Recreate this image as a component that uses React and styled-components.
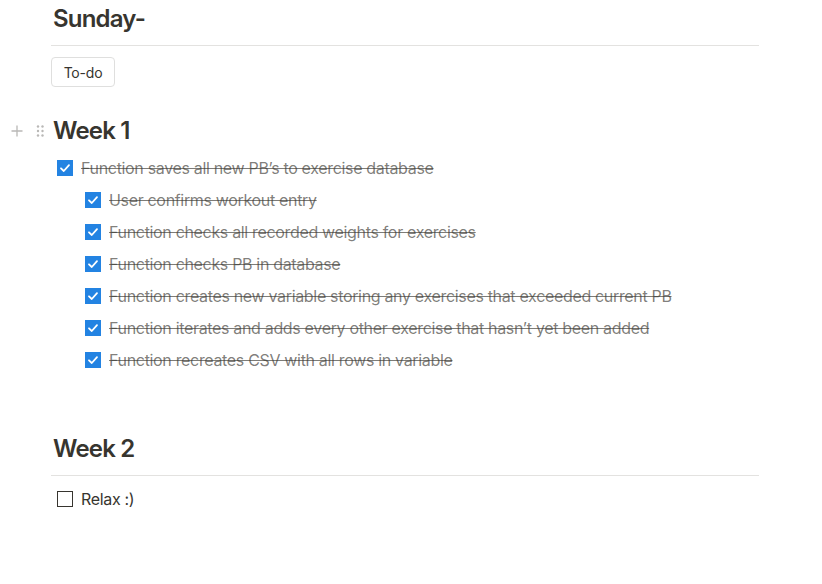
import React from "react";
import styled, { createGlobalStyle } from "styled-components";

const Global = createGlobalStyle`
  html, body { margin: 0; padding: 0; background: #ffffff; }
  body {
    font-family: Inter, "Noto Sans", "Liberation Sans", sans-serif;
    color: #37352f;
    -webkit-font-smoothing: antialiased;
  }
`;

const Page = styled.div`
  width: 708px;
  padding: 4px 0 40px 51px;
  display: flex;
  flex-direction: column;
`;

const Heading = styled.div`
  position: relative;
  font-size: 24px;
  font-weight: 600;
  line-height: 30px;
  height: 30px;
  padding-left: 2px;
  margin-top: ${(p) => p.$mt || 0}px;
  letter-spacing: -0.8px;
`;

const Divider = styled.div`
  height: 1px;
  background: #e3e2e0;
  margin-top: ${(p) => p.$mt}px;
`;

const Button = styled.button`
  align-self: flex-start;
  margin-top: 11px;
  height: 30px;
  width: 64px;
  border: 1px solid #dfdfde;
  border-radius: 4px;
  background: #fff;
  font-family: inherit;
  font-size: 14px;
  letter-spacing: -0.2px;
  color: #37352f;
  padding: 0;
  cursor: pointer;
`;

const Handles = styled.div`
  position: absolute;
  left: -40px;
  top: 0;
  height: 30px;
  display: flex;
  align-items: center;
  gap: 12px;
  color: #b9b8b6;
`;

const List = styled.div`
  display: flex;
  flex-direction: column;
  margin-top: ${(p) => p.$mt}px;
`;

const Row = styled.div`
  display: flex;
  align-items: center;
  height: 32px;
  padding-left: ${(p) => 6 + p.$level * 28}px;
  gap: 8px;
`;

const Box = styled.span`
  width: 16px;
  height: 16px;
  box-sizing: border-box;
  flex: none;
  display: flex;
  align-items: center;
  justify-content: center;
  background: ${(p) => (p.$checked ? "#2383e2" : "#fff")};
  border: ${(p) => (p.$checked ? "none" : "1.5px solid #37352f")};
`;

const Label = styled.span`
  font-size: 16px;
  line-height: 24px;
  letter-spacing: -0.33px;
  white-space: nowrap;
  color: ${(p) => (p.$checked ? "rgba(55,53,47,0.65)" : "#37352f")};
  text-decoration: ${(p) => (p.$checked ? "line-through" : "none")};
  text-decoration-color: rgba(55,53,47,0.65);
  text-decoration-thickness: 1px;
`;

const Check = () => (
  <svg width="12" height="12" viewBox="0 0 12 12" fill="none">
    <path d="M2 6.3 L4.8 9 L10 3.2" stroke="#fff" strokeWidth="1.8" strokeLinecap="round" strokeLinejoin="round" />
  </svg>
);

const Todo = ({ checked, level = 0, children }) => (
  <Row $level={level}>
    <Box $checked={checked}>{checked && <Check />}</Box>
    <Label $checked={checked}>{children}</Label>
  </Row>
);

const week1 = [
  "User confirms workout entry",
  "Function checks all recorded weights for exercises",
  "Function checks PB in database",
  "Function creates new variable storing any exercises that exceeded current PB",
  "Function iterates and adds every other exercise that hasn\u2019t yet been added",
  "Function recreates CSV with all rows in variable",
];

export default function App() {
  return (
    <>
      <Global />
      <Page>
        <Heading>Sunday-</Heading>
        <Divider $mt={11} />
        <Button>To-do</Button>
        <Heading $mt={29}>
          <Handles>
            <svg width="12" height="12" viewBox="0 0 12 12">
              <path d="M6 0.5 V11.5 M0.5 6 H11.5" stroke="currentColor" strokeWidth="1.3" />
            </svg>
            <svg width="10" height="14" viewBox="0 0 10 14" fill="currentColor">
              <circle cx="3" cy="2.5" r="1.2" />
              <circle cx="7.5" cy="2.5" r="1.2" />
              <circle cx="3" cy="7" r="1.2" />
              <circle cx="7.5" cy="7" r="1.2" />
              <circle cx="3" cy="11.5" r="1.2" />
              <circle cx="7.5" cy="11.5" r="1.2" />
            </svg>
          </Handles>
          Week 1
        </Heading>
        <List $mt={6}>
          <Todo checked>Function saves all new PB’s to exercise database</Todo>
          {week1.map((t) => (
            <Todo key={t} checked level={1}>
              {t}
            </Todo>
          ))}
        </List>
        <Heading $mt={58}>Week 2</Heading>
        <Divider $mt={11} />
        <List $mt={7}>
          <Todo>Relax :)</Todo>
        </List>
      </Page>
    </>
  );
}
